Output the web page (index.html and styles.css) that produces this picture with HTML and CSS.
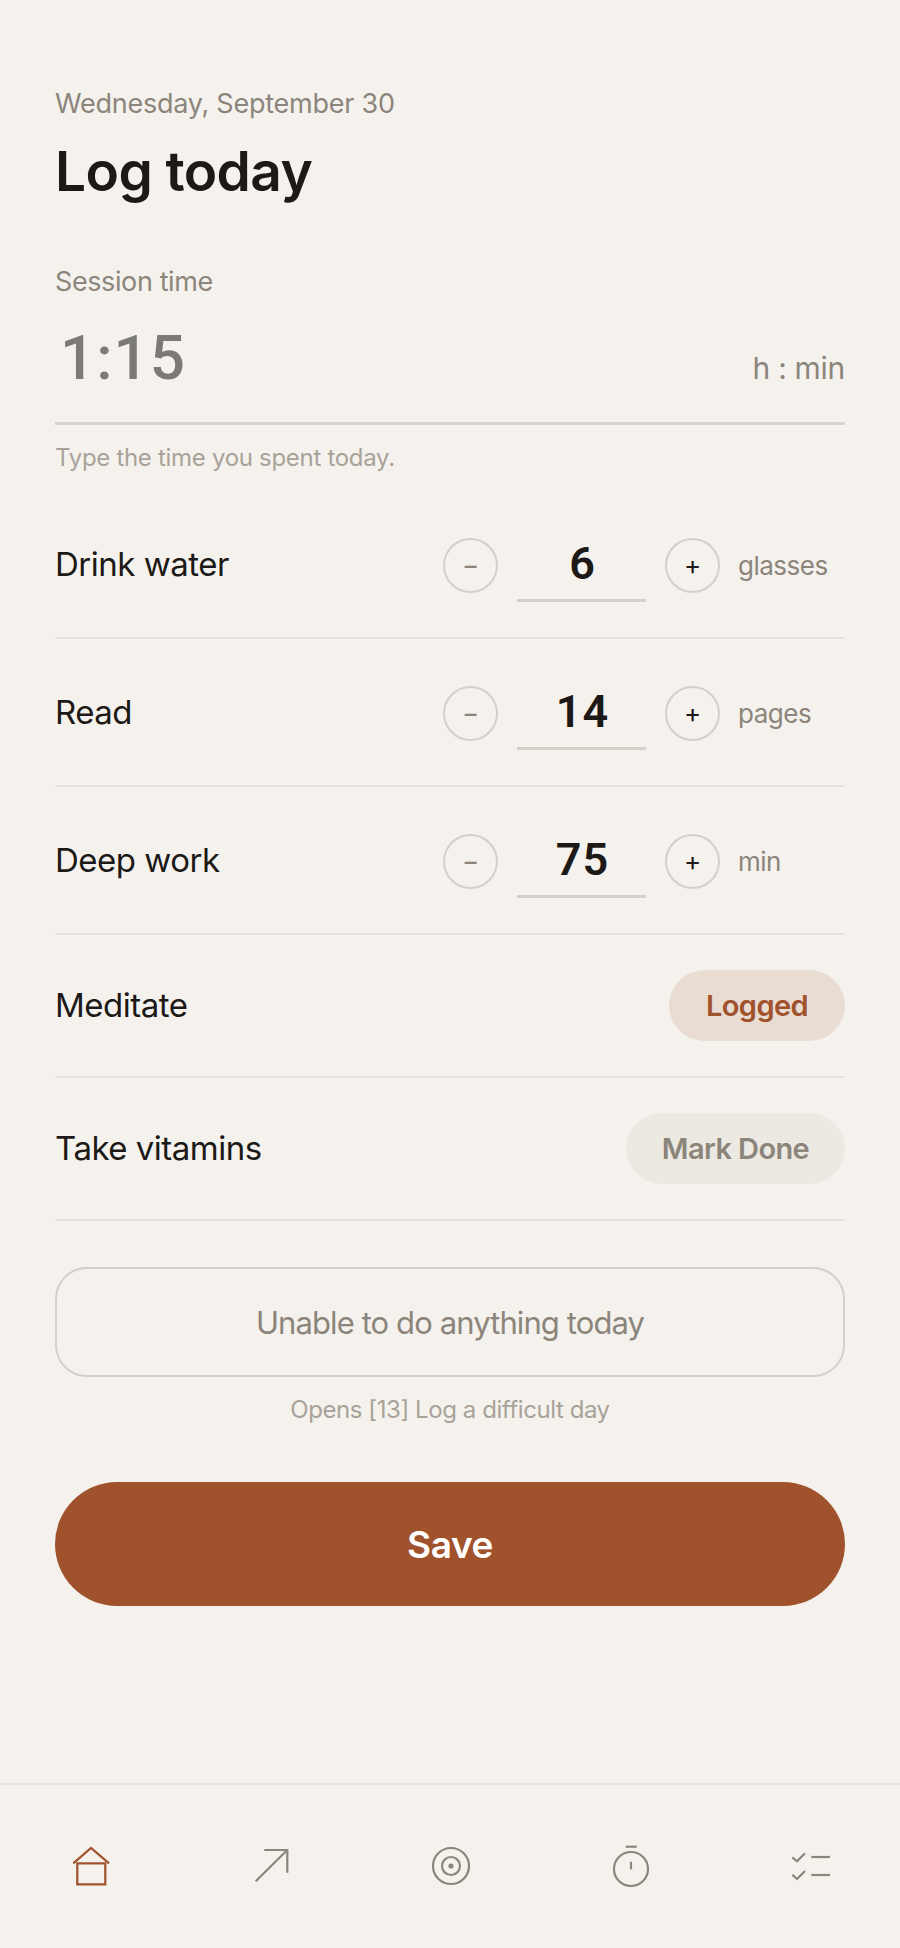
FILE: index.html
```html
<!DOCTYPE html>
<html lang="en">
<head>
<meta charset="utf-8">
<title>Log today</title>
<link rel="stylesheet" href="styles.css">
</head>
<body>
<div class="page">
  <main class="content">
    <p class="date">Wednesday, September 30</p>
    <h1 class="title">Log today</h1>
    <p class="label">Session time</p>
    <div class="time-field">
      <span class="time-value">1:15</span>
      <span class="time-unit">h : min</span>
    </div>
    <p class="hint">Type the time you spent today.</p>

    <section class="rows">
      <div class="row row-stepper">
        <span class="row-name">Drink water</span>
        <div class="stepper">
          <button class="step step-minus">−</button>
          <span class="step-value">6</span>
          <button class="step step-plus">+</button>
          <span class="step-unit">glasses</span>
        </div>
      </div>
      <div class="row row-stepper">
        <span class="row-name">Read</span>
        <div class="stepper">
          <button class="step step-minus">−</button>
          <span class="step-value">14</span>
          <button class="step step-plus">+</button>
          <span class="step-unit">pages</span>
        </div>
      </div>
      <div class="row row-stepper">
        <span class="row-name">Deep work</span>
        <div class="stepper">
          <button class="step step-minus">−</button>
          <span class="step-value">75</span>
          <button class="step step-plus">+</button>
          <span class="step-unit">min</span>
        </div>
      </div>
      <div class="row row-pill">
        <span class="row-name">Meditate</span>
        <button class="pill pill-on">Logged</button>
      </div>
      <div class="row row-pill">
        <span class="row-name">Take vitamins</span>
        <button class="pill pill-off">Mark Done</button>
      </div>
    </section>

    <button class="outline-btn">Unable to do anything today</button>
    <p class="caption">Opens [13] Log a difficult day</p>
    <button class="save-btn">Save</button>
  </main>

  <nav class="nav">
    <span class="nav-item">
      <svg class="icon icon-active" viewBox="0 0 48 48"><path d="M7.3 21.3 25 6l18 15.3"/><path d="M11.3 21.3h28v21h-28z"/></svg>
    </span>
    <span class="nav-item">
      <svg class="icon" viewBox="0 0 48 48"><path d="M9.7 39.3 41.3 8"/><path d="M18.3 8h23v22.7"/></svg>
    </span>
    <span class="nav-item">
      <svg class="icon" viewBox="0 0 48 48"><circle cx="25" cy="24" r="18"/><circle cx="25" cy="24" r="9"/><circle class="dot" cx="25" cy="24" r="2.6"/></svg>
    </span>
    <span class="nav-item">
      <svg class="icon" viewBox="0 0 48 48"><circle cx="25" cy="27" r="17"/><path d="M19.7 4.7h11"/><path d="M25 19.7v7.6"/></svg>
    </span>
    <span class="nav-item">
      <svg class="icon" viewBox="0 0 48 48"><path d="M6.3 15.3 11 19.3 19 11.3"/><path d="M25.3 15H44"/><path d="M6.3 32.7 11 37 19 29"/><path d="M25.3 33H44"/></svg>
    </span>
  </nav>
</div>
</body>
</html>
```
FILE: styles.css
```css
* { box-sizing: border-box; }
html, body { margin: 0; padding: 0; }
body {
  background: #f5f2ee;
  color: #1c1917;
  font-family: "Inter", "Liberation Sans", sans-serif;
}
p, h1 { margin: 0; }
button { font-family: inherit; cursor: pointer; padding: 0; }

.page { display: flex; flex-direction: column; height: 1948px; overflow: hidden; }
.content { flex: 1; padding: 84px 55px 0 55px; display: flex; flex-direction: column; }

.date { font-size: 27px; line-height: 40px; color: #8c857b; letter-spacing: -0.25px; }
.title { margin-top: 11px; font-size: 55px; line-height: 72px; font-weight: 600; letter-spacing: -0.6px; }
.label { margin-top: 57px; font-size: 27px; line-height: 36px; color: #8c857b; letter-spacing: -0.4px; }

.time-field {
  height: 125px;
  padding: 0 0 28px 5px;
  display: flex;
  justify-content: space-between;
  align-items: baseline;
  border-bottom: 3px solid #d8d4ce;
}
.time-value { font-family: "Roboto", sans-serif; font-weight: 500; font-size: 62px; line-height: 116px; color: #7b7a78; letter-spacing: 1px; }
.time-unit { font-size: 30px; color: #8c857b; letter-spacing: -0.3px; }

.hint { margin-top: 15px; font-size: 24px; line-height: 36px; color: #a8a298; letter-spacing: -0.3px; }

.rows { margin-top: 15px; display: flex; flex-direction: column; }
.row { display: flex; align-items: center; justify-content: space-between; border-bottom: 2px solid #e6e2dc; }
.row-stepper { height: 148px; padding-top: 2px; }
.row-pill { height: 143px; }
.row-name { font-size: 33px; line-height: 40px; padding-bottom: 2px; letter-spacing: -0.5px; }

.stepper { display: grid; grid-template-columns: 55px 167px 55px 125px; align-items: center; }
.step { width: 55px; height: 55px; border: 2px solid #d4d0c9; border-radius: 50%; background: none; font-size: 26px; line-height: 1; display: flex; align-items: center; justify-content: center; }
.step-minus { color: #8c857b; }
.step-plus { color: #1c1917; }
.step-value {
  justify-self: center;
  width: 129px;
  height: 74px;
  padding-left: 2px;
  border-bottom: 3px solid #d4d0c9;
  font-family: "Roboto", sans-serif;
  font-weight: 600;
  font-size: 45px;
  line-height: 71px;
  letter-spacing: 1px;
  text-align: center;
}
.step-unit { padding-left: 18px; font-size: 26px; color: #8c857b; letter-spacing: -0.5px; }

.pill { height: 71px; border: none; border-radius: 36px; font-size: 29px; font-weight: 600; letter-spacing: -0.6px; }
.pill-on { width: 176px; background: #e8dcd3; color: #a0522d; }
.pill-off { width: 219px; background: #ece9e2; color: #8c857b; }

.outline-btn { margin-top: 46px; height: 110px; border: 2px solid #d4d0c9; border-radius: 32px; background: none; font-size: 31px; color: #8c857b; letter-spacing: -0.9px; }
.caption { margin-top: 15px; font-size: 24px; line-height: 36px; color: #a8a298; text-align: center; letter-spacing: -0.43px; }
.save-btn { margin-top: 54px; height: 124px; border: none; border-radius: 62px; background: #a0522d; color: #fff; font-size: 37px; font-weight: 600; letter-spacing: -0.4px; }

.nav { height: 165px; border-top: 2px solid #e6e2dc; padding-top: 57px; display: grid; grid-template-columns: repeat(5, 180px); }
.nav-item { display: flex; justify-content: center; }
.icon { width: 48px; height: 48px; fill: none; stroke: #8c857b; stroke-width: 2.2; }
.icon-active { stroke: #a0522d; }
.dot { fill: #8c857b; stroke: none; }
```
